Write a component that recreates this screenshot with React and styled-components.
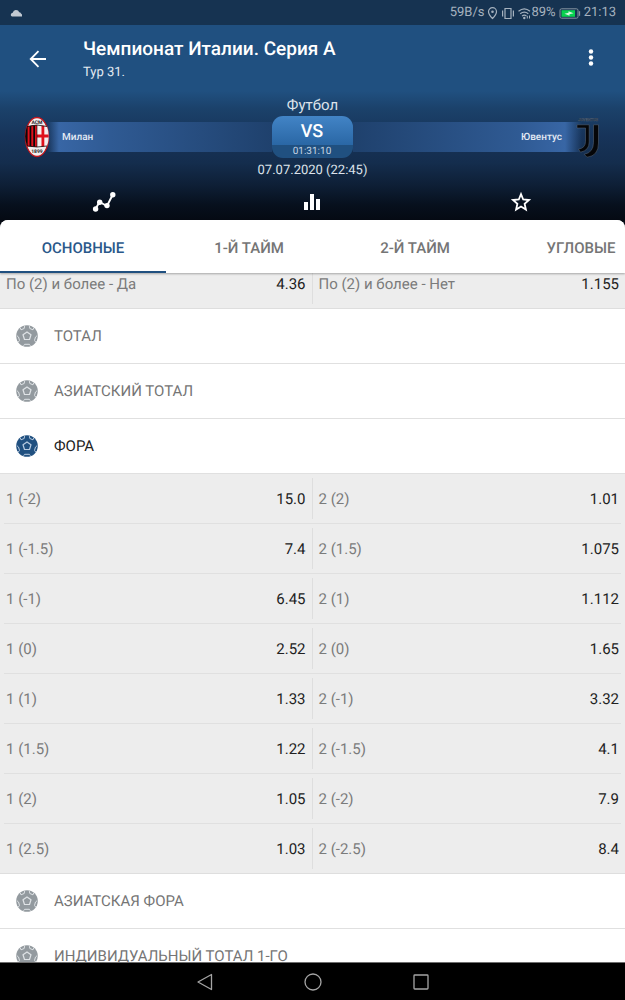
import React, { useLayoutEffect, useRef, useState } from "react";
import styled, { createGlobalStyle } from "styled-components";

const GlobalStyle = createGlobalStyle`
  *, *::before, *::after { box-sizing: border-box; }
  body {
    margin: 0;
    background: #050a13;
    font-family: Roboto, "Noto Sans", sans-serif;
    text-rendering: geometricPrecision;
  }
  button {
    margin: 0;
    padding: 0;
    border: 0;
    background: none;
    color: inherit;
    font: inherit;
    text-rendering: inherit;
    cursor: pointer;
  }
  h1, h2, p { margin: 0; font-weight: 400; }
  svg { display: block; flex: none; }
`;

const Screen = styled.div`
  display: flex;
  flex-direction: column;
  height: 100vh;
  overflow: hidden;
`;

const StatusBar = styled.div`
  display: flex;
  align-items: center;
  justify-content: space-between;
  flex: none;
  height: 25px;
  padding: 1px 9px 0 10px;
  background: #163351;
  color: #a6b2bf;
  font-size: 13px;
  line-height: 16px;
`;

const StatusGroup = styled.div`
  display: flex;
  align-items: center;
  gap: ${(p) => p.$gap || 0}px;
`;

const Hero = styled.header`
  flex: none;
  height: 195px;
  background: linear-gradient(
    #205080 0,
    #205080 66px,
    #1b416a 84px,
    #17345a 110px,
    #142d4d 138px,
    #0e1f36 160px,
    #07101d 180px,
    #050a13 195px
  );
  color: #fff;
`;

const AppBar = styled.div`
  display: flex;
  align-items: center;
  height: 68px;
  padding: 0 22px 0 26px;
`;

const IconButton = styled.button`
  display: flex;
  align-items: center;
  justify-content: center;
  width: 24px;
  height: 24px;
`;

const Titles = styled.div`
  flex: 1;
  min-width: 0;
  padding: 4px 0 0 33px;
`;

const Title = styled.h1`
  font-size: 19px;
  line-height: 24px;
  font-weight: 500;
  white-space: nowrap;
`;

const Subtitle = styled.p`
  font-size: 13px;
  line-height: 24px;
  color: #e4ebf2;
`;

const Caption = styled.p`
  padding-top: 2px;
  text-align: center;
  font-size: ${(p) => p.$size}px;
  line-height: 21px;
  color: #dde3ea;
`;

const Match = styled.div`
  display: grid;
  grid-template-columns: 1fr 81px 1fr;
  align-items: center;
  height: 42px;
  padding: 0 25px 0 24px;
`;

const Team = styled.div`
  display: flex;
  flex-direction: ${(p) => (p.$away ? "row-reverse" : "row")};
  align-items: center;
`;

const TeamBand = styled.div`
  flex: 1;
  height: 30px;
  margin: ${(p) => (p.$away ? "0 -6px 0 0" : "0 0 0 -3px")};
  padding: ${(p) => (p.$away ? "0 20px" : "0 15px")};
  background: linear-gradient(
    ${(p) => (p.$away ? "to left" : "to right")},
    rgba(56, 102, 165, 0) 0,
    #3866a5 ${(p) => (p.$away ? 17 : 12)}px,
    #2f5a93 64px,
    #1f416d 100%
  );
  color: #e3eaf4;
  font-size: 10px;
  line-height: 32px;
  font-weight: 500;
  text-align: ${(p) => (p.$away ? "right" : "left")};
`;

const VsBadge = styled.div`
  height: 42px;
  overflow: hidden;
  border-radius: 11px;
  background: linear-gradient(#4284c6, #2a67a5 29px, #205080 29px, #205080);
  text-align: center;
`;

const Versus = styled.div`
  height: 29px;
  font-size: 18px;
  line-height: 31px;
  font-weight: 500;
`;

const Countdown = styled.div`
  font-size: 10px;
  line-height: 14px;
  color: #c6d5e4;
`;

const HeroActions = styled.div`
  display: grid;
  grid-template-columns: repeat(3, 1fr);
  justify-items: center;
  padding-top: 9px;
`;

const Sheet = styled.main`
  display: flex;
  flex-direction: column;
  flex: 1;
  min-height: 0;
  overflow: hidden;
  border-radius: 8px 8px 0 0;
  background: #fff;
`;

const Tabs = styled.div`
  position: relative;
  display: flex;
  flex: none;
  height: 53px;
  overflow: hidden;
  background: #fff;
  box-shadow: 0 1px 2px rgba(0, 0, 0, 0.3);
  z-index: 1;
`;

const Tab = styled.button`
  flex: 0 0 166px;
  height: 53px;
  padding-top: 4px;
  border-bottom: 2px solid ${(p) => (p.$active ? "#205080" : "transparent")};
  color: ${(p) => (p.$active ? "#2a588a" : "#757575")};
  font-size: 15px;
  line-height: 20px;
  font-weight: 500;
`;

const Markets = styled.div`
  flex: 1;
  min-height: 0;
  overflow-y: auto;
  scrollbar-width: none;
`;

const MarketHeader = styled.button`
  display: flex;
  align-items: center;
  gap: 16px;
  width: 100%;
  height: 55px;
  padding: 0 16px;
  border-bottom: 1px solid #e0e0e0;
  color: ${(p) => (p.$open ? "#212121" : "#757575")};
  font-size: 15px;
  line-height: 20px;
  text-align: left;
`;

const OddsPanel = styled.div`
  padding: 0 4px;
  border-bottom: 1px solid #dedede;
  background: #ededed;
`;

const OddsTable = styled.table`
  width: 100%;
  border-collapse: collapse;
  table-layout: fixed;

  td {
    padding: 4px 0;
    border-bottom: 1px solid #e0e0e0;
  }
  td:first-child > button { border-right: 1px solid #dedede; }
  tr:last-child td { border-bottom: 0; }
`;

const Outcome = styled.button`
  display: flex;
  align-items: center;
  justify-content: space-between;
  width: 100%;
  height: 41px;
  padding: ${(p) => (p.$second ? "0 2px 0 6px" : "0 6px 0 2px")};
  font-size: 15px;
  line-height: 20px;
`;

const OutcomeName = styled.span`
  color: #7b7b7b;
`;

const Price = styled.span`
  color: #212121;
`;

const NavBar = styled.nav`
  display: flex;
  align-items: center;
  justify-content: center;
  gap: 84px;
  flex: none;
  height: 38px;
  border-top: 1px solid #6e6e6e;
  background: #000;
`;

const Ball = ({ active }) => (
  <svg width="22" height="22" viewBox="0 0 22 22" fill="none" aria-hidden="true">
    <circle cx="11" cy="11" r="10.8" fill={active ? "#205080" : "#939a9f"} />
    <g stroke={active ? "#b8cbe0" : "#dfe3e6"} strokeWidth="1" strokeLinejoin="round">
      <path d="M11 6.9 15 9.8 13.5 14.5H8.5L7 9.8Z" strokeWidth="1.2" />
      <path d="M4.2 2.9 5 4.8 8.2 3.5 8.6 1.1M17.8 2.9 17 4.8 13.8 3.5 13.4 1.1" />
      <path d="M.9 10.7 2.5 12 3.5 15.4 2.2 17.2M21.1 10.7 19.5 12 18.5 15.4 19.8 17.2" />
      <path d="M7.6 20.7 8.6 19.3H13.4L14.4 20.7" />
    </g>
  </svg>
);

const MilanCrest = () => (
  <svg width="26" height="42" viewBox="0 0 26 42" role="img" aria-label="Милан">
    <defs>
      <clipPath id="milan-shield">
        <path d="M3 10.5Q13 7.5 23 10.5Q26.5 20 23 30Q13 32 3 30Q-.5 20 3 10.5Z" />
      </clipPath>
    </defs>
    <ellipse cx="13" cy="21" rx="11.6" ry="19.5" fill="#f3f0ef" stroke="#c5151c" strokeWidth="1.3" />
    <g clipPath="url(#milan-shield)">
      <path d="M1 8H13V32H1Z" fill="#0b0808" />
      <path d="M3.6 8h2v24h-2zM7.3 8h2v24h-2zM11 8h2v24h-2z" fill="#e0101b" />
      <path d="M13 8H25V32H13Z" fill="#f4eeee" />
      <path d="M17.5 8h2.8v24h-2.8zM13 18.5h12v3H13z" fill="#e0101b" />
      <path d="M13 8V32" stroke="#111" strokeWidth=".6" />
    </g>
    <path d="M3 10.5Q13 7.5 23 10.5M3 30Q13 32 23 30" fill="none" stroke="#181010" strokeWidth=".8" />
    <g fill="#252222" fontFamily="Roboto, sans-serif" fontWeight="700" textAnchor="middle">
      <text x="13" y="8" fontSize="5">ACM</text>
      <text x="13" y="36.5" fontSize="5">1899</text>
    </g>
  </svg>
);

const JuventusCrest = () => (
  <svg width="24" height="42" viewBox="0 0 24 42" role="img" aria-label="Ювентус">
    <text x="12" y="5" fill="#0a0c10" stroke="#53647a" strokeWidth=".3" fontFamily="Roboto, sans-serif" fontSize="4" fontWeight="700" textAnchor="middle">JUVENTUS</text>
    <g fill="#050608" stroke="#5c6a7c" strokeWidth=".5" strokeLinejoin="round">
      <path d="M1 8.8H13.2V26Q13.2 34.5 4.5 36.2L2.5 33.2Q9.5 32 9.5 25.5V12H1Z" />
      <path d="M17.5 8.8H22.5V27Q22.5 40 11 41.2L8.2 38.3Q17.5 36.5 17.5 26.5Z" />
    </g>
  </svg>
);

const StatusIcons = () => (
  <svg width="44" height="15" viewBox="0 0 44 15" fill="none" stroke="#a6b2bf" strokeWidth="1.2" aria-hidden="true">
    <path d="M5.5 12.5Q1.5 8.5 1.5 5.7A4 4 0 0 1 9.5 5.7Q9.5 8.5 5.5 12.5Z" />
    <circle cx="5.5" cy="5.8" r="1.3" fill="#a6b2bf" stroke="none" />
    <path d="M18 2.5h6v10h-6zM15.6 4.5v6M26.4 4.5v6" />
    <path d="M31.5 5.3Q37.3 .5 43 5.3M33.2 7.7Q37.3 4.4 41.3 7.7M35 10.1Q37.3 8.2 39.5 10.1" />
    <circle cx="37.3" cy="12" r="1.2" fill="#a6b2bf" stroke="none" />
    <path d="M40.3 12.5V9.8M42.5 9.5V12.5" strokeWidth="1" />
  </svg>
);

const Battery = () => (
  <svg width="22" height="11" viewBox="0 0 22 11" aria-hidden="true">
    <rect x="1" y=".8" width="18" height="9.4" rx="1.5" fill="none" stroke="#8794a2" />
    <rect x="2.5" y="2.2" width="13.5" height="6.6" fill="#08d14f" />
    <path d="M5.5 5.7 9.5 4.8V3.2L14.5 5.3 10.5 6.2V7.8Z" fill="#d5f5df" />
    <path d="M20.5 3.2v4.6" stroke="#8794a2" strokeWidth="1.3" />
  </svg>
);

const BOTH_TO_SCORE = [["По (2) и более - Да", "4.36", "По (2) и более - Нет", "1.155"]];

const HANDICAP = [
  ["1 (-2)", "15.0", "2 (2)", "1.01"],
  ["1 (-1.5)", "7.4", "2 (1.5)", "1.075"],
  ["1 (-1)", "6.45", "2 (1)", "1.112"],
  ["1 (0)", "2.52", "2 (0)", "1.65"],
  ["1 (1)", "1.33", "2 (-1)", "3.32"],
  ["1 (1.5)", "1.22", "2 (-1.5)", "4.1"],
  ["1 (2)", "1.05", "2 (-2)", "7.9"],
  ["1 (2.5)", "1.03", "2 (-2.5)", "8.4"],
];

const TABS = ["ОСНОВНЫЕ", "1-Й ТАЙМ", "2-Й ТАЙМ", "УГЛОВЫЕ"];

const Odds = ({ rows }) => (
  <OddsPanel>
    <OddsTable>
      <tbody>
        {rows.map(([homeName, homePrice, awayName, awayPrice]) => (
          <tr key={homeName}>
            <td>
              <Outcome>
                <OutcomeName>{homeName}</OutcomeName>
                <Price>{homePrice}</Price>
              </Outcome>
            </td>
            <td>
              <Outcome $second>
                <OutcomeName>{awayName}</OutcomeName>
                <Price>{awayPrice}</Price>
              </Outcome>
            </td>
          </tr>
        ))}
      </tbody>
    </OddsTable>
  </OddsPanel>
);

const Market = ({ name, open }) => (
  <MarketHeader $open={open} aria-expanded={Boolean(open)}>
    <Ball active={open} />
    {name}
  </MarketHeader>
);

export default function App() {
  const [tab, setTab] = useState(0);
  const markets = useRef(null);

  useLayoutEffect(() => {
    markets.current.scrollTop = 14;
  }, []);

  return (
    <Screen>
      <GlobalStyle />
      <StatusBar>
        <svg width="13" height="8" viewBox="0 0 13 8" aria-hidden="true">
          <path d="M2 7.5Q.5 7.2 .8 5.5Q1.2 4 2.7 3.8Q3.5 .8 6 1Q8.5 1 9.2 3.2Q10.5 3.2 11 4.5Q12.5 5 12 7.5Z" fill="#c1c9d2" />
        </svg>
        <StatusGroup $gap={3}>
          <span>59B/s</span>
          <StatusGroup>
            <StatusIcons />
            <span>89%</span>
          </StatusGroup>
          <Battery />
          <span>21:13</span>
        </StatusGroup>
      </StatusBar>

      <Hero>
        <AppBar>
          <IconButton aria-label="Назад">
            <svg width="24" height="24" viewBox="0 0 24 24" fill="none" stroke="#fff" strokeWidth="1.8">
              <path d="M20 12H4.8M12.5 4.2 4.7 12 12.5 19.8" />
            </svg>
          </IconButton>
          <Titles>
            <Title>Чемпионат Италии. Серия А</Title>
            <Subtitle>Тур 31.</Subtitle>
          </Titles>
          <IconButton aria-label="Меню">
            <svg width="24" height="24" viewBox="0 0 24 24" fill="#fff">
              <circle cx="12" cy="4.5" r="2.2" />
              <circle cx="12" cy="10.5" r="2.2" />
              <circle cx="12" cy="16.5" r="2.2" />
            </svg>
          </IconButton>
        </AppBar>

        <Caption $size={15}>Футбол</Caption>
        <Match>
          <Team>
            <MilanCrest />
            <TeamBand>Милан</TeamBand>
          </Team>
          <VsBadge>
            <Versus>VS</Versus>
            <Countdown>01:31:10</Countdown>
          </VsBadge>
          <Team $away>
            <JuventusCrest />
            <TeamBand $away>Ювентус</TeamBand>
          </Team>
        </Match>
        <Caption $size={13}>07.07.2020 (22:45)</Caption>

        <HeroActions>
          <IconButton aria-label="График">
            <svg width="24" height="24" viewBox="0 0 24 24" fill="#fff">
              <path d="M3.5 19 7.5 12 15 16 20.8 4.5" fill="none" stroke="#fff" strokeWidth="1.9" />
              <circle cx="3.6" cy="19" r="2.7" />
              <circle cx="7.7" cy="12.3" r="2.7" />
              <circle cx="15" cy="15.6" r="2.7" />
              <circle cx="20.8" cy="4.8" r="2.7" />
            </svg>
          </IconButton>
          <IconButton aria-label="Статистика">
            <svg width="24" height="24" viewBox="0 0 24 24" fill="#fff">
              <path d="M4 12h4v8H4zM10 4h4v16h-4zM16 9h4v11h-4z" />
            </svg>
          </IconButton>
          <IconButton aria-label="Избранное">
            <svg width="24" height="24" viewBox="0 0 24 24" fill="none" stroke="#fff" strokeWidth="1.8">
              <path d="M12 4.2 14.2 9.5 20 10 15.6 13.8 16.9 19.5 12 16.5 7.1 19.5 8.4 13.8 4 10 9.8 9.5Z" />
            </svg>
          </IconButton>
        </HeroActions>
      </Hero>

      <Sheet>
        <Tabs role="tablist">
          {TABS.map((name, i) => (
            <Tab key={name} role="tab" aria-selected={tab === i} $active={tab === i} onClick={() => setTab(i)}>
              {name}
            </Tab>
          ))}
        </Tabs>
        <Markets ref={markets}>
          <Odds rows={BOTH_TO_SCORE} />
          <Market name="ТОТАЛ" />
          <Market name="АЗИАТСКИЙ ТОТАЛ" />
          <Market name="ФОРА" open />
          <Odds rows={HANDICAP} />
          <Market name="АЗИАТСКАЯ ФОРА" />
          <Market name="ИНДИВИДУАЛЬНЫЙ ТОТАЛ 1-ГО" />
        </Markets>
      </Sheet>

      <NavBar>
        <IconButton aria-label="Назад">
          <svg width="24" height="24" viewBox="0 0 24 24" fill="none" stroke="#a5a5a5" strokeWidth="1.3" strokeLinejoin="round">
            <path d="M5 12 18.5 4.5V19.5Z" />
          </svg>
        </IconButton>
        <IconButton aria-label="Домой">
          <svg width="24" height="24" viewBox="0 0 24 24" fill="none" stroke="#a5a5a5" strokeWidth="1.3">
            <circle cx="12" cy="12" r="8" />
          </svg>
        </IconButton>
        <IconButton aria-label="Недавние">
          <svg width="24" height="24" viewBox="0 0 24 24" fill="none" stroke="#a5a5a5" strokeWidth="1.3">
            <rect x="5" y="5" width="14" height="14" rx=".8" />
          </svg>
        </IconButton>
      </NavBar>
    </Screen>
  );
}
